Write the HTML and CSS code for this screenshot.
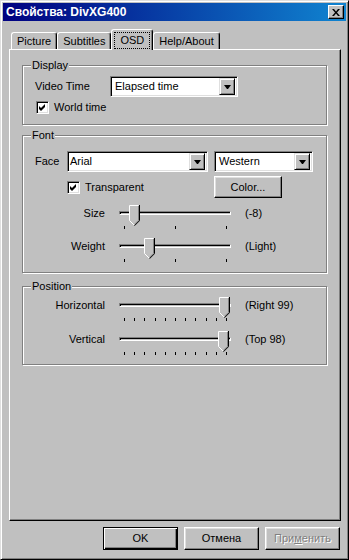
FILE: index.html
```html
<!DOCTYPE html>
<html lang="ru">
  <head>
    <meta charset="UTF-8" />
    <title>Свойства: DivXG400</title>
    <link rel="stylesheet" href="styles.css">
  </head>
  <body>
    <div class="window">
      <!-- Title bar -->
      <div class="titlebar">
        <span class="title">Свойства: DivXG400</span>
        <span class="close-btn">
          <svg width="8" height="7" viewBox="0 0 8 7"><path d="M0 0h2l2 2.5L6 0h2L5 3.5 8 7H6L4 4.5 2 7H0l3-3.5z" fill="#000"/></svg>
        </span>
      </div>

      <!-- Tabs -->
      <div class="tabs">
        <div class="tab">Picture</div>
        <div class="tab">Subtitles</div>
        <div class="tab tab-active"><span class="focus">OSD</span></div>
        <div class="tab">Help/About</div>
      </div>

      <div class="panel">
        <!-- Display -->
        <div class="group group-display">
          <span class="group-title">Display</span>
          <div class="row row-first">
            <span class="row-label label-video">Video Time</span>
            <div class="combo combo-time">
              <span class="combo-text">Elapsed time</span>
              <span class="combo-btn"><svg width="7" height="4" viewBox="0 0 7 4"><path d="M0 0h7L4 4H3z" fill="#000"/></svg></span>
            </div>
          </div>
          <label class="check check-world">
            <span class="check-box"><svg width="7" height="7" viewBox="0 0 7 7"><path d="M0 2l2 2 4-4v3L2 7 0 5z" fill="#000"/></svg></span>
            World time
          </label>
        </div>

        <!-- Font -->
        <div class="group group-font">
          <span class="group-title">Font</span>
          <div class="row row-first">
            <span class="row-label label-face">Face</span>
            <div class="combo combo-face">
              <span class="combo-text">Arial</span>
              <span class="combo-btn"><svg width="7" height="4" viewBox="0 0 7 4"><path d="M0 0h7L4 4H3z" fill="#000"/></svg></span>
            </div>
            <div class="combo combo-charset">
              <span class="combo-text">Western</span>
              <span class="combo-btn"><svg width="7" height="4" viewBox="0 0 7 4"><path d="M0 0h7L4 4H3z" fill="#000"/></svg></span>
            </div>
          </div>
          <div class="row row-transparent">
            <label class="check check-transparent">
              <span class="check-box"><svg width="7" height="7" viewBox="0 0 7 7"><path d="M0 2l2 2 4-4v3L2 7 0 5z" fill="#000"/></svg></span>
              Transparent
            </label>
            <button class="btn btn-color">Color...</button>
          </div>
          <div class="slider-row">
            <span class="slider-label">Size</span>
            <div class="slider">
              <div class="track"></div>
              <svg class="thumb" style="left: 10px" width="11" height="21" viewBox="0 0 11 21">
                <path d="M0 0h10v15l-5 5-5-5z" fill="#c0c0c0"/>
                <path d="M.5 15.5V.5h9M.5 15.5l4.5 4.5" stroke="#fff" fill="none"/>
                <path d="M10.5 0v15.7l-5 5" stroke="#000" fill="none"/>
                <path d="M9.5 1v14.3l-4 4" stroke="#808080" fill="none"/>
              </svg>
              <div class="ticks"><i></i><i></i><i></i></div>
            </div>
            <span class="slider-value">(-8)</span>
          </div>
          <div class="slider-row">
            <span class="slider-label">Weight</span>
            <div class="slider">
              <div class="track"></div>
              <svg class="thumb" style="left: 25px" width="11" height="21" viewBox="0 0 11 21">
                <path d="M0 0h10v15l-5 5-5-5z" fill="#c0c0c0"/>
                <path d="M.5 15.5V.5h9M.5 15.5l4.5 4.5" stroke="#fff" fill="none"/>
                <path d="M10.5 0v15.7l-5 5" stroke="#000" fill="none"/>
                <path d="M9.5 1v14.3l-4 4" stroke="#808080" fill="none"/>
              </svg>
              <div class="ticks"><i></i><i></i><i></i></div>
            </div>
            <span class="slider-value">(Light)</span>
          </div>
        </div>

        <!-- Position -->
        <div class="group group-position">
          <span class="group-title">Position</span>
          <div class="slider-row row-first">
            <span class="slider-label">Horizontal</span>
            <div class="slider">
              <div class="track"></div>
              <svg class="thumb" style="left: 100px" width="11" height="21" viewBox="0 0 11 21">
                <path d="M0 0h10v15l-5 5-5-5z" fill="#c0c0c0"/>
                <path d="M.5 15.5V.5h9M.5 15.5l4.5 4.5" stroke="#fff" fill="none"/>
                <path d="M10.5 0v15.7l-5 5" stroke="#000" fill="none"/>
                <path d="M9.5 1v14.3l-4 4" stroke="#808080" fill="none"/>
              </svg>
              <div class="ticks"><i></i><i></i><i></i><i></i><i></i><i></i><i></i><i></i><i></i><i></i><i></i></div>
            </div>
            <span class="slider-value">(Right 99)</span>
          </div>
          <div class="slider-row">
            <span class="slider-label">Vertical</span>
            <div class="slider">
              <div class="track"></div>
              <svg class="thumb" style="left: 99px" width="11" height="21" viewBox="0 0 11 21">
                <path d="M0 0h10v15l-5 5-5-5z" fill="#c0c0c0"/>
                <path d="M.5 15.5V.5h9M.5 15.5l4.5 4.5" stroke="#fff" fill="none"/>
                <path d="M10.5 0v15.7l-5 5" stroke="#000" fill="none"/>
                <path d="M9.5 1v14.3l-4 4" stroke="#808080" fill="none"/>
              </svg>
              <div class="ticks"><i></i><i></i><i></i><i></i><i></i><i></i><i></i><i></i><i></i><i></i><i></i></div>
            </div>
            <span class="slider-value">(Top 98)</span>
          </div>
        </div>
      </div>

      <!-- Dialog buttons -->
      <div class="buttons">
        <button class="btn btn-default">OK</button>
        <button class="btn">Отмена</button>
        <button class="btn btn-disabled">При<u>м</u>енить</button>
      </div>
    </div>
  </body>
</html>
```

FILE: styles.css
```css
* {
  box-sizing: border-box;
}

body {
  margin: 0;
  background-color: #c0c0c0;
  font-family: "Liberation Sans", Arial, sans-serif;
  font-size: 11px;
  line-height: 13px;
  color: #000;
}

.window {
  width: 349px;
  height: 560px;
  padding: 2px;
  display: flex;
  flex-direction: column;
  background-color: #c0c0c0;
  border: 1px solid;
  border-color: #dfdfdf #000 #000 #dfdfdf;
  box-shadow: inset 1px 1px #fff, inset -1px -1px #808080;
}

/* title bar */
.titlebar {
  height: 18px;
  display: flex;
  align-items: center;
  justify-content: space-between;
  padding: 0 2px 0 3px;
  background: linear-gradient(90deg, #000080, #1084d0);
}

.title {
  color: #fff;
  font-weight: bold;
  font-size: 12px;
}

.close-btn {
  width: 16px;
  height: 14px;
  display: flex;
  align-items: center;
  justify-content: center;
  background-color: #c0c0c0;
  border: 1px solid;
  border-color: #fff #000 #000 #fff;
  box-shadow: inset -1px -1px #808080;
}

/* tabs */
.tabs {
  height: 20px;
  margin: 8px 5px 0 6px;
  padding-left: 2px;
  display: flex;
  align-items: flex-end;
}

.tab {
  height: 17px;
  padding: 0 5px;
  display: flex;
  align-items: center;
  border: 1px solid;
  border-bottom: none;
  border-color: #fff #000 #000 #fff;
  border-radius: 3px 3px 0 0;
  box-shadow: inset -1px 0 #808080;
}

.tab-active {
  position: relative;
  z-index: 1;
  height: 21px;
  margin-bottom: -1px;
  padding: 2px 2px 1px 2px;
  align-items: stretch;
  background-color: #c0c0c0;
}

.focus {
  display: flex;
  align-items: center;
  padding: 0 5px;
  border: 1px dotted #000;
}

.panel {
  height: 472px;
  margin: 0 5px 0 6px;
  padding-top: 15px;
  border: 1px solid;
  border-color: #fff #000 #000 #fff;
  box-shadow: inset -1px -1px #808080;
}

/* group boxes */
.group {
  margin: 0 13px 0 12px;
  border: 1px solid #808080;
  box-shadow: inset 1px 1px #fff, 1px 1px #fff;
}

.group-display {
  padding-bottom: 10px;
}

.group-display .row-first {
  margin-top: 10px;
}

.group-font {
  margin-top: 10px;
  padding-bottom: 10px;
}

.group-font .row-first {
  margin-top: 15px;
}

.group-position {
  margin-top: 13px;
  padding-bottom: 9px;
}

.group-position .row-first {
  margin-top: 10px;
}

.group-title {
  display: table;
  margin: -7px 0 -6px 8px;
  padding: 0 1px;
  background-color: #c0c0c0;
}

.row {
  display: flex;
  align-items: center;
  padding-left: 12px;
}

.row-label.label-video {
  width: 75px;
}

.row-label.label-face {
  width: 32px;
}

/* combo boxes */
.combo {
  height: 21px;
  display: flex;
  align-items: center;
  justify-content: space-between;
  padding: 2px;
  background-color: #fff;
  border: 1px solid;
  border-color: #808080 #fff #fff #808080;
  box-shadow: inset 1px 1px #000, inset -1px -1px #dfdfdf;
}

.combo-text {
  padding-left: 2px;
}

.combo-time {
  width: 128px;
}

.combo-face {
  width: 141px;
}

.combo-face .combo-text {
  padding-left: 0;
}

.combo-charset {
  width: 99px;
  margin-left: 6px;
}

.combo-btn {
  width: 16px;
  height: 17px;
  display: flex;
  align-items: center;
  justify-content: center;
  background-color: #c0c0c0;
  border: 1px solid;
  border-color: #dfdfdf #000 #000 #dfdfdf;
  box-shadow: inset 1px 1px #fff, inset -1px -1px #808080;
}

/* check boxes */
.check {
  display: flex;
  align-items: center;
  gap: 5px;
}

.check-world {
  margin: 4px 0 0 13px;
}

.check-transparent {
  width: 147px;
  margin-left: 32px;
}

.check-box {
  width: 13px;
  height: 13px;
  display: flex;
  align-items: center;
  justify-content: center;
  background-color: #fff;
  border: 1px solid;
  border-color: #808080 #fff #fff #808080;
  box-shadow: inset 1px 1px #000, inset -1px -1px #dfdfdf;
}

.row-transparent {
  margin-top: 4px;
}

/* buttons */
.btn {
  width: 75px;
  height: 23px;
  padding: 0;
  font: inherit;
  color: #000;
  background-color: #c0c0c0;
  border: 1px solid;
  border-color: #fff #000 #000 #fff;
  box-shadow: inset -1px -1px #808080, inset 1px 1px #dfdfdf;
}

.btn-color {
  width: 68px;
  height: 22px;
}

.btn-default {
  border-color: #000;
  box-shadow: inset 1px 1px #fff, inset -1px -1px #000, inset -2px -2px #808080;
}

.btn-disabled {
  color: #808080;
  text-shadow: 1px 1px #fff;
}

.buttons {
  margin: 6px 6px 0 0;
  display: flex;
  justify-content: flex-end;
  gap: 6px;
}

/* track bars */
.slider-row {
  display: flex;
  align-items: flex-start;
}

.group-font .slider-row {
  margin-top: 7px;
}

.group-font .slider-row + .slider-row {
  margin-top: 9px;
}

.group-position .slider-row + .slider-row {
  margin-top: 10px;
}

.slider-label {
  width: 82px;
  padding-top: 2px;
  text-align: right;
}

.slider {
  position: relative;
  width: 112px;
  height: 24px;
  margin-left: 14px;
  padding-top: 6px;
}

.track {
  height: 4px;
  border: 1px solid;
  border-color: #808080 #fff #fff #808080;
  box-shadow: inset 1px 1px #000;
}

.thumb {
  position: absolute;
  top: 0;
}

.ticks {
  margin-top: 11px;
  padding: 0 4px 0 5px;
  display: flex;
  justify-content: space-between;
}

.ticks i {
  width: 1px;
  height: 3px;
  background-color: #000;
}

.slider-value {
  margin-left: 14px;
  padding-top: 2px;
}
```
